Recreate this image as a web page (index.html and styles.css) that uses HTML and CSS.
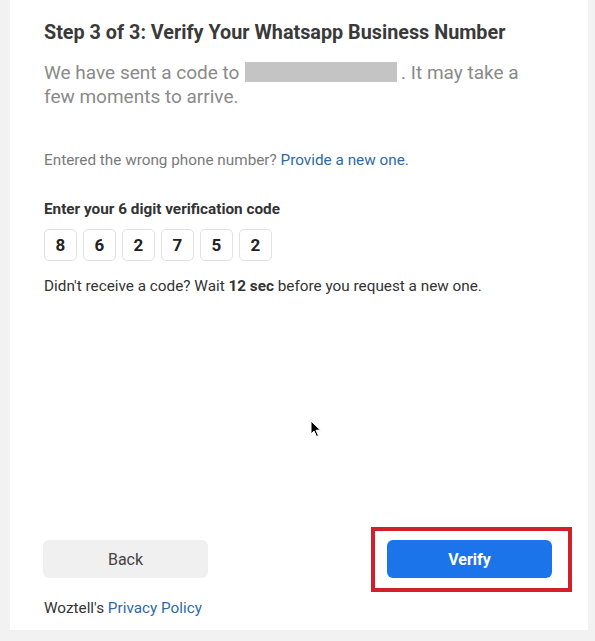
FILE: index.html
```html
<!DOCTYPE html>
<html lang="en">
<head>
    <meta charset="UTF-8">
    <meta name="viewport" content="width=device-width, initial-scale=1.0">
    <title>Verify Your Whatsapp Business Number</title>
    <link rel="stylesheet" href="styles.css">
</head>
<body>
    <div class="card">
        <h1>Step 3 of 3: Verify Your Whatsapp Business Number</h1>
        <p class="lead"><span>We have sent a code to </span><span class="redacted"></span><span>. It may take a</span> <span>few moments to arrive.</span></p>

        <p class="hint">Entered the wrong phone number? <a href="#">Provide a new one.</a></p>

        <label class="code-label">Enter your 6 digit verification code</label>
        <div class="code-row">
            <input class="digit" type="text" value="8">
            <input class="digit" type="text" value="6">
            <input class="digit" type="text" value="2">
            <input class="digit" type="text" value="7">
            <input class="digit" type="text" value="5">
            <input class="digit" type="text" value="2">
        </div>
        <p class="resend">Didn't receive a code? Wait <b>12 sec</b> before you request a new one.</p>

        <div class="spacer"></div>

        <div class="actions">
            <button class="btn back">Back</button>
            <div class="highlight">
                <button class="btn verify">Verify</button>
            </div>
        </div>
        <p class="privacy">Woztell's <a href="#">Privacy Policy</a></p>

        <svg class="cursor" width="12" height="18" viewBox="0 0 12 18">
            <path d="M1 1 L1 14 L4 11 L6.5 16.5 L8.5 15.6 L6 10.2 L10.5 10.2 Z" fill="#000" stroke="#fff" stroke-width="1"/>
        </svg>
    </div>
</body>
</html>
```

FILE: styles.css
```css
/* page */
body {
    margin: 0;
    background-color: #f2f2f2;
    font-family: Roboto, "Liberation Sans", Arial, sans-serif;
    color: #333;
}

.card {
    position: relative;
    box-sizing: border-box;
    width: 578px;
    height: 630px;
    margin-left: 10px;
    padding: 22px 34px 0 34px;
    background-color: #fff;
    display: flex;
    flex-direction: column;
}

h1 {
    margin: 0;
    font-size: 19.8px;
    line-height: 22px;
    font-weight: 700;
    color: #3a3a3a;
    white-space: nowrap;
}

.lead {
    margin: 17px 0 0 0;
    font-size: 19px;
    line-height: 24px;
    color: #8a8a8a;
    width: 490px;
}

/* hidden phone number */
.redacted {
    display: inline-block;
    width: 152px;
    height: 20px;
    background-color: #c4c4c4;
    vertical-align: -3px;
    margin-left: 1px;
    margin-right: 4px;
}

a {
    color: #2f6aa3;
    text-decoration: none;
}

.hint {
    margin: 41px 0 0 0;
    font-size: 15.3px;
    line-height: 20px;
    color: #7a7a7a;
}

.code-label {
    margin-top: 29px;
    font-size: 15.3px;
    line-height: 20px;
    font-weight: 700;
    color: #333;
}

.code-row {
    display: flex;
    gap: 6px;
    margin-top: 10px;
}

.digit {
    box-sizing: border-box;
    width: 33px;
    height: 32px;
    padding: 0;
    border: 1px solid #e2e2e2;
    border-radius: 5px;
    text-align: center;
    font-family: inherit;
    font-size: 17px;
    font-weight: 700;
    color: #222;
}

.resend {
    margin: 15px 0 0 0;
    font-size: 15.3px;
    line-height: 20px;
    color: #333;
}

.spacer {
    flex: 1;
}

/* bottom buttons */
.actions {
    display: flex;
    justify-content: space-between;
    align-items: center;
}

.btn {
    width: 165px;
    height: 38px;
    border: none;
    border-radius: 6px;
    font-family: inherit;
    font-size: 16px;
    cursor: pointer;
}

.back {
    background-color: #f0f0f0;
    color: #444;
    margin-left: -1px;
}

.verify {
    background-color: #1b74ea;
    color: #fff;
    font-weight: 700;
}

.highlight {
    border: 4px solid #d0202a;
    padding: 9px 16px 10px 12px;
    margin-right: -18px;
    margin-top: -13px;
    margin-bottom: -14px;
}

.privacy {
    margin: 20px 0 12px 0;
    font-size: 15.3px;
    line-height: 20px;
    color: #333;
}

.cursor {
    position: absolute;
    left: 300px;
    top: 420px;
}
```
